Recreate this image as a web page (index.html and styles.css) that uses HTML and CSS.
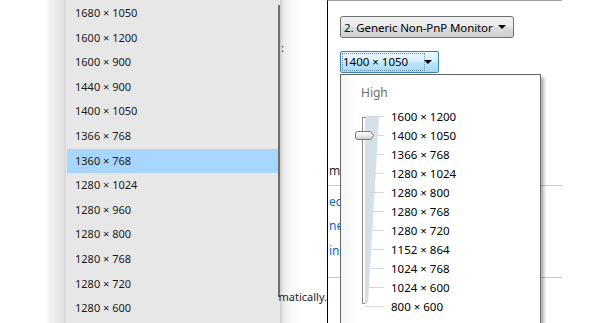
FILE: index.html
```
<!DOCTYPE html>
<html lang="en">
<head>
  <meta charset="UTF-8">
  <title>Screen Resolution</title>
  <link rel="stylesheet" href="styles.css">
</head>
<body>

  <div class="screen">
    <div class="edge"></div>

    <!-- Windows 10 style drop list -->
    <div class="drop-list">
      <ul class="res-list">
        <li>1680 × 1050</li>
        <li>1600 × 1200</li>
        <li>1600 × 900</li>
        <li>1440 × 900</li>
        <li>1400 × 1050</li>
        <li>1366 × 768</li>
        <li class="selected">1360 × 768</li>
        <li>1280 × 1024</li>
        <li>1280 × 960</li>
        <li>1280 × 800</li>
        <li>1280 × 768</li>
        <li>1280 × 720</li>
        <li>1280 × 600</li>
      </ul>
      <div class="scroll-thumb"></div>
    </div>

    <div class="gap">
      <span class="gap-dots">:</span>
      <span class="gap-text">matically.</span>
    </div>

    <!-- Windows 7 display settings -->
    <div class="pane">
      <div class="combo combo-monitor">
        <span>2. Generic Non-PnP Monitor</span>
        <span class="arrow"></span>
      </div>
      <div class="combo combo-res">
        <span class="focus">1400 × 1050</span>
        <span class="arrow"></span>
      </div>

      <div class="behind">
        <p class="frag frag-dark frag-ma">ma</p>
        <hr>
        <p class="frag frag-ec">ec</p>
        <p class="frag frag-ner">ner</p>
        <p class="frag frag-ing">ing</p>
        <hr>
      </div>

      <div class="popup">
        <div class="popup-label">High</div>
        <div class="popup-body">
          <svg class="slider" width="50" height="212" viewBox="0 0 50 212">
            <g stroke="#d2d8de" stroke-width="1">
              <line x1="24" y1="9.5" x2="43" y2="9.5"/>
              <line x1="24" y1="28.5" x2="43" y2="28.5"/>
              <line x1="24" y1="47.5" x2="43" y2="47.5"/>
              <line x1="24" y1="66.5" x2="43" y2="66.5"/>
              <line x1="24" y1="85.5" x2="43" y2="85.5"/>
              <line x1="24" y1="104.5" x2="43" y2="104.5"/>
              <line x1="24" y1="123.5" x2="43" y2="123.5"/>
              <line x1="24" y1="142.5" x2="43" y2="142.5"/>
              <line x1="24" y1="161.5" x2="43" y2="161.5"/>
              <line x1="24" y1="180.5" x2="43" y2="180.5"/>
              <line x1="24" y1="199.5" x2="43" y2="199.5"/>
            </g>
            <polygon points="24,10 38,10 27,196 24,196" fill="#d5e0e8"/>
            <path d="M24.5 10.5 H21.5 V196.5 H24.5" fill="none" stroke="#8a8a8a"/>
            <defs>
              <linearGradient id="thumbFill" x1="0" y1="0" x2="0" y2="1">
                <stop offset="0" stop-color="#ffffff"/>
                <stop offset="0.5" stop-color="#ececec"/>
                <stop offset="1" stop-color="#c9c9c9"/>
              </linearGradient>
            </defs>
            <path d="M16.5 24.5 H29.5 L32.5 28.5 L29.5 32.5 H16.5 Q14.5 32.5 14.5 30.5 V26.5 Q14.5 24.5 16.5 24.5 Z" fill="url(#thumbFill)" stroke="#7a7a7a"/>
          </svg>
          <ul class="popup-list">
            <li>1600 × 1200</li>
            <li>1400 × 1050</li>
            <li>1366 × 768</li>
            <li>1280 × 1024</li>
            <li>1280 × 800</li>
            <li>1280 × 768</li>
            <li>1280 × 720</li>
            <li>1152 × 864</li>
            <li>1024 × 768</li>
            <li>1024 × 600</li>
            <li>800 × 600</li>
          </ul>
        </div>
      </div>
    </div>
  </div>

</body>
</html>
```

FILE: styles.css
```
body {
  margin: 0;
  background: #ffffff;
  font-family: "Noto Sans", "Open Sans", sans-serif;
  color: #1a1a1a;
}
.screen {
  display: flex;
  width: 615px;
  height: 323px;
  overflow: hidden;
}
.edge {
  width: 65px;
  flex: none;
  background: linear-gradient(to right, #ffffff 0, #ffffff 46px, #f1f1f1 50px, #e2e2e2 64px, #d6d6d6 65px);
}
.drop-list {
  width: 215px;
  flex: none;
  display: flex;
  background: #e7e7e7;
  border-left: 1px solid #d8d8d8;
  box-sizing: border-box;
}
.res-list {
  list-style: none;
  margin: 0;
  padding: 1px 0 0 1px;
  width: 211px;
}
.res-list li {
  height: 24.6px;
  line-height: 24.6px;
  padding-left: 8px;
  font-size: 11px;
  color: #1b1b1b;
}
.res-list li.selected {
  background: #a8d6fc;
}
.scroll-thumb {
  width: 2px;
  margin-top: 5px;
  height: 292px;
  background: #6e6e6e;
}
.gap {
  width: 47px;
  flex: none;
  background: linear-gradient(to right, #cfcfcf 0, #ececec 4px, #f8f8f8 10px, #ffffff 22px);
  display: flex;
  flex-direction: column;
  align-items: flex-end;
  font-size: 11px;
}
.gap-dots {
  margin-top: 40px;
  align-self: flex-start;
  padding-left: 1px;
  color: #444;
}
.gap-text {
  margin-top: auto;
  margin-bottom: 19px;
  color: #222;
}
.pane {
  position: relative;
  width: 235px;
  flex: none;
  border-left: 1px solid #000000;
  border-top: 1px solid #a0a0a0;
  box-sizing: border-box;
  font-size: 11px;
}
.combo {
  margin-left: 12px;
  height: 22px;
  box-sizing: border-box;
  border-radius: 3px;
  display: flex;
  align-items: center;
  justify-content: space-between;
  padding: 0 7px 0 3px;
  color: #000;
  white-space: nowrap;
}
.combo-monitor {
  margin-top: 15px;
  width: 174px;
  border: 1px solid #707070;
  background: linear-gradient(#f2f2f2 0, #ebebeb 50%, #dddddd 51%, #cfcfcf 100%);
  font-size: 11.5px;
  letter-spacing: -0.1px;
}
.combo-res {
  margin-top: 13px;
  width: 99px;
  border: 1px solid #3c7fb1;
  border-radius: 2px;
  background: linear-gradient(#eaf6fd 0, #d9f0fc 50%, #bee6fd 51%, #a7d9f5 100%);
  padding-left: 2px;
  font-size: 11.5px;
}
.combo-res .focus {
  outline: 1px dotted #6b8ea8;
  padding-right: 16px;
  line-height: 16px;
}
.arrow {
  width: 0;
  height: 0;
  border-left: 4px solid transparent;
  border-right: 4px solid transparent;
  border-top: 4px solid #000;
}
.behind {
  margin-top: 90px;
}
.behind hr {
  border: 0;
  border-top: 1px solid #c8c8c8;
  margin: 0;
  width: 234px;
}
.frag {
  margin: 0;
  padding-left: 1px;
  color: #0066cc;
  line-height: 16px;
  font-size: 12px;
}
.frag-dark {
  color: #1e1e1e;
}
.frag-ma {
  margin-bottom: 6px;
}
.frag-ec {
  margin-top: 8px;
}
.frag-ner {
  margin-top: 8px;
}
.frag-ing {
  margin-top: 9px;
  margin-bottom: 18px;
}
.popup {
  position: absolute;
  left: 12px;
  top: 73px;
  width: 201px;
  height: 270px;
  box-sizing: border-box;
  border: 1px solid #646464;
  background: linear-gradient(to right, #f4f4f4 0, #ffffff 16px);
  box-shadow: 3px 3px 3px rgba(0, 0, 0, 0.3);
}
.popup-label {
  padding: 9px 0 0 20px;
  height: 20px;
  line-height: 18px;
  font-size: 12px;
  color: #6d6d6d;
}
.popup-body {
  display: flex;
  margin-top: 3px;
}
.slider {
  flex: none;
  display: block;
}
.popup-list {
  list-style: none;
  margin: 0;
  padding: 0;
}
.popup-list li {
  height: 19px;
  line-height: 19px;
  color: #000;
  font-size: 11.5px;
}
```
